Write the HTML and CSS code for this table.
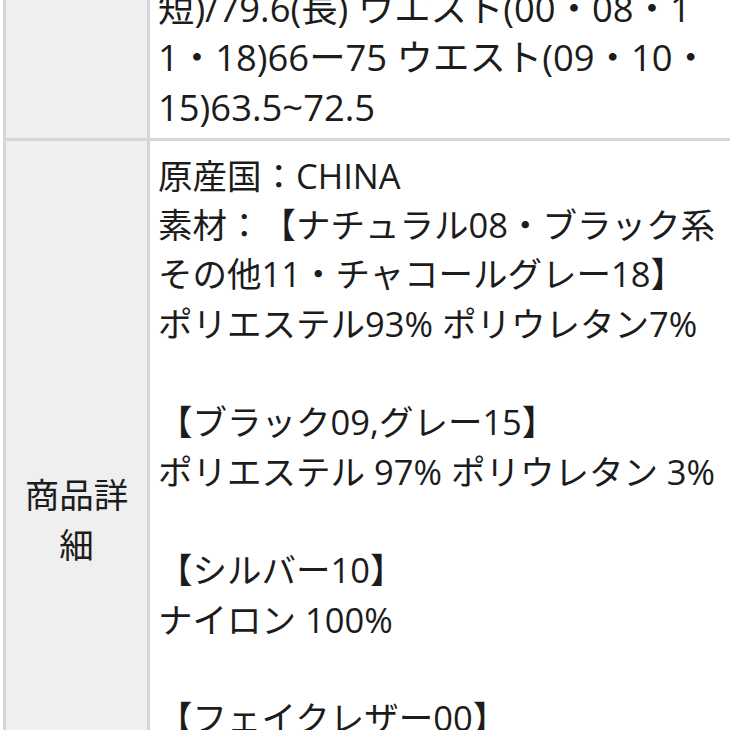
FILE: index.html
```html
<!DOCTYPE html>
<html lang="ja">
<head>
<meta charset="utf-8">
<link rel="stylesheet" href="styles.css">
</head>
<body>
<div class="viewport">
<table class="spec">
  <tr>
    <th class="label"></th>
    <td class="value value-size">
      <div class="line">短)/79.6(長) ウエスト(00・08・1</div>
      <div class="line">1・18)66ー75 ウエスト(09・10・</div>
      <div class="line">15)63.5~72.5</div>
    </td>
  </tr>
  <tr>
    <th class="label">商品詳細</th>
    <td class="value">
      <div class="line">原産国：CHINA</div>
      <div class="line">素材：【ナチュラル08・ブラック系</div>
      <div class="line">その他11・チャコールグレー18】</div>
      <div class="line">ポリエステル93% ポリウレタン7%</div>
      <div class="line">&nbsp;</div>
      <div class="line">【ブラック09,グレー15】</div>
      <div class="line">ポリエステル 97% ポリウレタン 3%</div>
      <div class="line">&nbsp;</div>
      <div class="line">【シルバー10】</div>
      <div class="line">ナイロン 100%</div>
      <div class="line">&nbsp;</div>
      <div class="line">【フェイクレザー00】</div>
      <div class="line">ポリウレタン 100%</div>
      <div class="line">&nbsp;</div>
      <div class="line">&nbsp;</div>
    </td>
  </tr>
</table>
</div>
</body>
</html>
```

FILE: styles.css
```css
html, body {
  margin: 0;
  padding: 0;
  background: #ffffff;
  overflow: hidden;
}

.viewport {
  width: 730px;
  height: 730px;
  overflow: hidden;
}

.spec {
  width: 820px;
  margin-top: -31px;
  margin-left: 3px;
  border-collapse: collapse;
  font-family: "Open Sans", "Noto Sans CJK JP", sans-serif;
  font-size: 34.5px;
  line-height: 49.3px;
  color: #1c1c1c;
  text-spacing-trim: space-all;
}

.spec th,
.spec td {
  border: 3px solid #d6d6d6;
}

.label {
  width: 121px;
  padding: 0 10px;
  background: #efefef;
  font-weight: normal;
  text-align: center;
  vertical-align: middle;
}

.value {
  padding: 10px 8px 8px 8px;
  background: #ffffff;
  vertical-align: top;
}

.value-size {
  font-size: 36.4px;
  padding-top: 12px;
  padding-bottom: 6px;
}

.line {
  white-space: nowrap;
}
```
